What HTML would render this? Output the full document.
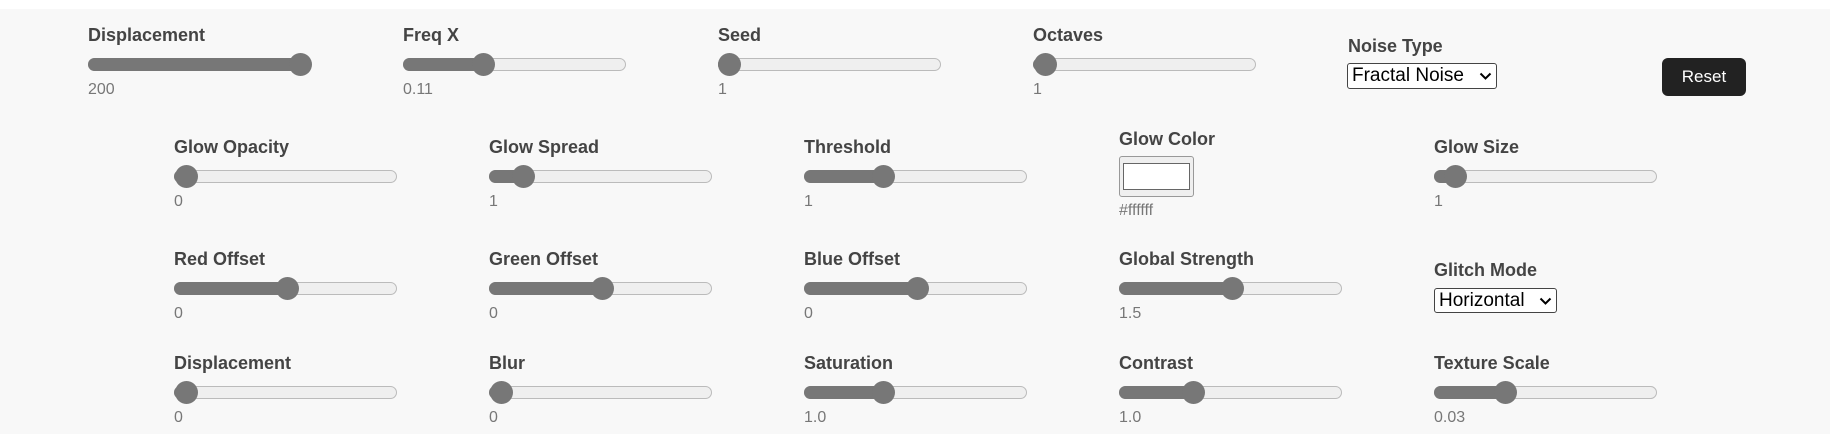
<!DOCTYPE html>
<html><head><meta charset="utf-8"><style>
*{box-sizing:border-box;margin:0;padding:0}
body{width:1830px;height:434px;background:#fff;font-family:"Liberation Sans",sans-serif;position:relative;overflow:hidden}
#bg{position:absolute;left:0;top:9px;width:1830px;height:425px;background:#f8f8f8}
.l{position:absolute;font-weight:bold;font-size:18px;color:#444;line-height:20px;white-space:nowrap}
.v{position:absolute;font-size:16px;color:#777;line-height:18px}
.s{position:absolute;width:223px;height:13px;border:1px solid #bbb;border-radius:7px;background:#efefef;overflow:visible}
.s .f{position:absolute;left:-1px;top:-1px;height:13px;background:#777;border-radius:7px 0 0 7px}
.s .t{position:absolute;top:-6px;width:23px;height:23px;border-radius:50%;background:#777}
.sel{position:absolute;border:1px solid #444;border-radius:3px;background:#fff;font-size:19px;color:#000;padding-left:4px;line-height:24px;white-space:nowrap}
.sel svg{position:absolute;right:4px;top:8px}
</style></head><body>
<div id="bg"></div>
<div id="c"></div>
<div class="l" style="left:1348px;top:36px">Noise Type</div>
<div class="sel" style="left:1347px;top:63px;width:150px;height:26px">Fractal Noise<svg width="13" height="9" viewBox="0 0 13 9"><path d="M1.5 1.5L6.5 6.5L11.5 1.5" stroke="#000" stroke-width="2" fill="none"/></svg></div>
<div style="position:absolute;left:1662px;top:58px;width:84px;height:38px;background:#222;border-radius:6px;color:#fff;font-size:17px;line-height:38px;text-align:center">Reset</div>
<div class="l" style="left:1119px;top:129px">Glow Color</div>
<div style="position:absolute;left:1119px;top:156px;width:75px;height:41px;border:1px solid #999;border-radius:3px;background:#efefef"><div style="position:absolute;left:3px;top:6px;width:67px;height:27px;background:#fff;border:1px solid #666"></div></div>
<div class="v" style="left:1119px;top:202px">#ffffff</div>
<div class="l" style="left:1434px;top:260px">Glitch Mode</div>
<div class="sel" style="left:1434px;top:288px;width:123px;height:25px;line-height:23px">Horizontal<svg width="13" height="9" viewBox="0 0 13 9"><path d="M1.5 1.5L6.5 6.5L11.5 1.5" stroke="#000" stroke-width="2" fill="none"/></svg></div>
<script>
const items=[
[88,35,"Displacement",300,"200"],[403,35,"Freq X",483,"0.11"],[718,35,"Seed",729,"1"],[1033,35,"Octaves",1045,"1"],
[174,147,"Glow Opacity",186,"0"],[489,147,"Glow Spread",523,"1"],[804,147,"Threshold",883,"1"],[1434,147,"Glow Size",1455,"1"],
[174,259,"Red Offset",287,"0"],[489,259,"Green Offset",602,"0"],[804,259,"Blue Offset",917,"0"],[1119,259,"Global Strength",1232,"1.5"],
[174,363,"Displacement",186,"0"],[489,363,"Blur",501,"0"],[804,363,"Saturation",883,"1.0"],[1119,363,"Contrast",1193,"1.0"],[1434,363,"Texture Scale",1505,"0.03"]];
let h="";
for(const [x,ly,t,tc,v] of items){
 const sy=ly+29, vy=ly+55;
 const off=tc-x;
 h+=`<div class="l" style="left:${x}px;top:${ly-10}px">${t}</div>`;
 h+=`<div class="s" style="left:${x}px;top:${sy-6}px"><div class="f" style="width:${off}px"></div><div class="t" style="left:${off-12.5}px"></div></div>`;
 h+=`<div class="v" style="left:${x}px;top:${vy-9}px">${v}</div>`;
}
document.getElementById("c").innerHTML=h;
</script>
</body></html>
